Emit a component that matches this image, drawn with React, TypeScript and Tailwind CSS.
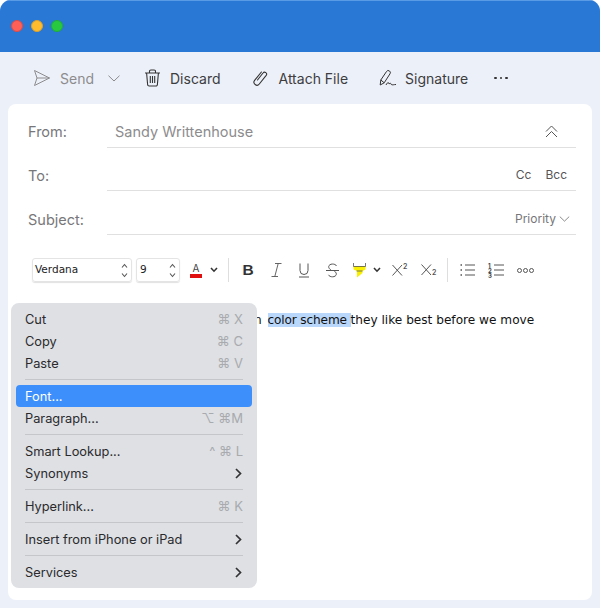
import React from "react";

const ui = { fontFamily: "Inter, 'Noto Sans', sans-serif" };

function Chevron({ className = "", w = 12, h = 7 }: { className?: string; w?: number; h?: number }) {
  return (
    <svg width={w} height={h} viewBox="0 0 12 7" fill="none" stroke="currentColor" strokeWidth="1" className={className}>
      <path d="M0.5 0.7 L6 6 L11.5 0.7" />
    </svg>
  );
}

function Updown() {
  return (
    <svg width="7" height="15" viewBox="0 0 7 15" fill="none" stroke="#555" strokeWidth="1.1">
      <path d="M1 4.5 L3.5 1.5 L6 4.5" />
      <path d="M1 10.5 L3.5 13.5 L6 10.5" />
    </svg>
  );
}

function SmallCaret() {
  return (
    <svg width="8" height="6" viewBox="0 0 8 6" fill="none" stroke="#333" strokeWidth="1.6">
      <path d="M1 1 L4 4.2 L7 1" />
    </svg>
  );
}

function Row({ label, h, pt, children }: { label: string; h: string; pt: string; children?: React.ReactNode }) {
  return (
    <div className={`flex ${h}`}>
      <div className={`w-[79px] shrink-0 flex items-center text-[14.5px] text-[#77777a] ${pt}`}>{label}</div>
      <div className={`flex-1 flex items-center justify-between border-b border-[#e0e0e0] ${pt}`}>{children}</div>
    </div>
  );
}

function Sep() {
  return <div className="h-[11px] flex items-center mx-[14px]"><div className="h-px w-full bg-[#c4c6ca]" /></div>;
}

function Item({ label, right, active, arrow }: { label: string; right?: string; active?: boolean; arrow?: boolean }) {
  return (
    <div className={`h-[22px] mx-[5px] pl-[9px] pr-[9px] pt-[1px] rounded-[4px] flex items-center justify-between text-[12.8px] ${active ? "bg-[#3d8ffb] text-white" : "text-[#2a2a2c]"}`}>
      <span>{label}</span>
      {right && <span className="text-[#a8aaae] text-[13px]">{right}</span>}
      {arrow && (
        <svg width="7" height="11" viewBox="0 0 7 11" fill="none" stroke="#333" strokeWidth="1.7" className="mr-[1px]">
          <path d="M1 1 L5.5 5.5 L1 10" />
        </svg>
      )}
    </div>
  );
}

function Slot({ w, children }: { w: string; children: React.ReactNode }) {
  return <div className={`${w} shrink-0 flex items-center justify-center`}>{children}</div>;
}

export default function App() {
  return (
    <div className="relative w-[600px] h-[608px] bg-white overflow-hidden" style={ui}>
      <div className="h-full flex flex-col bg-[#ecf0f8] rounded-t-[11px] overflow-hidden">
        <div className="h-[52px] shrink-0 bg-[#2a78d6] border-t border-[#5a9be6] flex items-center pl-[11px] gap-[8px] pb-[2px]">
          <div className="w-[12px] h-[12px] rounded-full bg-[#fe5f57] border border-[#e2493f]" />
          <div className="w-[12px] h-[12px] rounded-full bg-[#febc2e] border border-[#e0a023]" />
          <div className="w-[12px] h-[12px] rounded-full bg-[#28c840] border border-[#1fae33]" />
        </div>

        <div className="h-[52px] shrink-0 flex items-center pl-[33px] text-[14px] text-[#3d3d40]">
          <svg width="18" height="18" viewBox="0 0 18 18" fill="none" stroke="#8c8c8e" strokeWidth="1" strokeLinejoin="round">
            <path d="M1.5 1.5 L16.5 9 L1.5 16.5 L4 9 Z" />
            <path d="M4 9 L16.5 9" />
          </svg>
          <span className="ml-[9px] pt-[1px] text-[#8c8c8e]">Send</span>
          <Chevron className="ml-[14px] text-[#8c8c8e]" />
          <svg className="ml-[24px]" width="17" height="18" viewBox="0 0 17 18" fill="none" stroke="#333" strokeWidth="1.1">
            <path d="M1 4 H16" />
            <path d="M5.5 4 V2.6 A1.4 1.4 0 0 1 7 1 H10 A1.4 1.4 0 0 1 11.5 2.6 V4" />
            <path d="M2.6 4 L3.6 15.4 A1.6 1.6 0 0 0 5.2 17 H11.8 A1.6 1.6 0 0 0 13.4 15.4 L14.4 4" />
            <path d="M6.3 7 V14 M8.5 7 V14 M10.7 7 V14" />
          </svg>
          <span className="ml-[9px] pt-[1px]">Discard</span>
          <svg className="ml-[32px]" width="15" height="16" viewBox="0 0 15 16" fill="none" stroke="#333" strokeWidth="1.1" strokeLinecap="round">
            <path d="M4.5 10 L10 3 A2 2 0 0 1 13.2 5.4 L6.3 14 A2.9 2.9 0 0 1 1.6 10.4 L8.4 2" />
          </svg>
          <span className="ml-[11px] pt-[1px]">Attach File</span>
          <svg className="ml-[31px]" width="18" height="18" viewBox="0 0 18 18" fill="none" stroke="#333" strokeWidth="1" strokeLinejoin="round">
            <path d="M1.2 16 L1.8 11 L7.5 2.5 A2 2 0 0 1 11 4.8 L5.2 13.8 Z" />
            <path d="M1.8 11 L5.2 13.8" />
            <path d="M7 16 C8.5 13 10 13 10 15 C11 14 12 14 12.3 15.5 C13.2 16.3 15 15.5 17 15.5" />
          </svg>
          <span className="ml-[8px] pt-[1px]">Signature</span>
          <div className="ml-[26px] flex gap-[3px]">
            <div className="w-[2.5px] h-[2.5px] rounded-full bg-[#333]" />
            <div className="w-[2.5px] h-[2.5px] rounded-full bg-[#333]" />
            <div className="w-[2.5px] h-[2.5px] rounded-full bg-[#333]" />
          </div>
        </div>

        <div className="flex-1 mx-[8px] mb-[8px] bg-white rounded-[8px] pl-[20px] pr-[16px]">
          <Row label="From:" h="h-[44px]" pt="pt-[12px]">
            <span className="pl-[8px] text-[14.5px] text-[#8c8c8e]">Sandy Writtenhouse</span>
            <svg className="mr-[18px]" width="13" height="13" viewBox="0 0 13 13" fill="none" stroke="#555" strokeWidth="1">
              <path d="M1 6.5 L6.5 1 L12 6.5" />
              <path d="M1 12 L6.5 6.5 L12 12" />
            </svg>
          </Row>
          <Row label="To:" h="h-[43px]" pt="pt-[12px]">
            <span />
            <div className="flex gap-[14px] pr-[9px] text-[12px] text-[#555558]">
              <span>Cc</span>
              <span>Bcc</span>
            </div>
          </Row>
          <Row label="Subject:" h="h-[44px]" pt="pt-[13px]">
            <span />
            <div className="flex items-center gap-[3px] pr-[6px] text-[12px] text-[#77777a]">
              <span>Priority</span>
              <Chevron w={11} h={6} />
            </div>
          </Row>

          <div className="h-[24px] mt-[23px] flex items-center ml-[4px]">
            <div className="w-[100px] h-[24px] shrink-0 rounded-[3px] border border-[#e4e4e4] shadow-[0_1px_1px_rgba(0,0,0,0.12)] flex items-center justify-between pl-[2px] pr-[3px] text-[10.5px] text-[#222]" style={{ fontFamily: "'DejaVu Sans', sans-serif" }}>
              <span>Verdana</span>
              <Updown />
            </div>
            <div className="ml-[4px] w-[44px] h-[24px] shrink-0 rounded-[3px] border border-[#e4e4e4] shadow-[0_1px_1px_rgba(0,0,0,0.12)] flex items-center justify-between pl-[3px] pr-[3px] text-[10.5px] text-[#222]" style={{ fontFamily: "'DejaVu Sans', sans-serif" }}>
              <span>9</span>
              <Updown />
            </div>
            <div className="ml-[10px] w-[12px] shrink-0 flex flex-col items-center">
              <span className="text-[10px] leading-[11px] text-[#444]">A</span>
              <div className="w-[12px] h-[4px] bg-[#e01010] mt-[0px]" />
            </div>
            <div className="ml-[8px]"><SmallCaret /></div>
            <div className="ml-[10px] w-px h-[24px] bg-[#dedede] shrink-0" />
            <Slot w="w-[38px]">
              <span className="text-[15.5px] font-bold text-[#333] leading-none" style={{ fontFamily: "'Liberation Sans', sans-serif" }}>B</span>
            </Slot>
            <Slot w="w-[18px]">
              <svg width="11" height="14" viewBox="0 0 11 14" fill="none" stroke="#555" strokeWidth="0.9">
                <path d="M4 0.5 H10.5 M0.5 13.5 H7 M7.2 0.5 L3.8 13.5" />
              </svg>
            </Slot>
            <Slot w="w-[38px]">
              <svg width="10" height="15" viewBox="0 0 10 15" fill="none" stroke="#555" strokeWidth="1">
                <path d="M1 0.5 V7.5 A4 4 0 0 0 9 7.5 V0.5" />
                <path d="M0 14 H10" />
              </svg>
            </Slot>
            <Slot w="w-[18px]">
              <svg width="13" height="15" viewBox="0 0 13 15" fill="none" stroke="#555" strokeWidth="1">
                <path d="M10.5 3 C9.5 0.3 3 0.3 2.7 3.6 C2.6 5.2 3.8 6.2 5.5 7.5" />
                <path d="M7.5 7.5 C9.4 8.6 10.5 9.7 10.3 11.3 C10 14.5 3.5 14.6 2.5 11.8" />
                <path d="M0 7.5 H13" />
              </svg>
            </Slot>
            <div className="ml-[12px] shrink-0">
              <svg width="13" height="15" viewBox="0 0 13 15">
                <path d="M0.5 3 H12.5 V6.5 L9.5 8 V10 L4 14.5 V8 L0.5 6.5 Z" fill="#f8f000" />
                <path d="M0.5 0 V3.5 H12.5 V0" fill="none" stroke="#555" strokeWidth="0.8" />
                <path d="M3.5 8 H9.5" stroke="#555" strokeWidth="0.8" />
              </svg>
            </div>
            <div className="ml-[7px]"><SmallCaret /></div>
            <div className="ml-[11px] flex items-start text-[#555] shrink-0 w-[16px]">
              <svg width="11" height="12" viewBox="0 0 11 12" fill="none" stroke="#555" strokeWidth="1"><path d="M0.5 1 L10 11.5 M10 1 L0.5 11.5" /></svg>
              <span className="text-[7px] leading-[6px] font-semibold">2</span>
            </div>
            <div className="ml-[13px] flex items-end text-[#555] shrink-0 w-[16px]">
              <svg width="11" height="12" viewBox="0 0 11 12" fill="none" stroke="#555" strokeWidth="1"><path d="M0.5 0.5 L10 11 M10 0.5 L0.5 11" /></svg>
              <span className="text-[7px] leading-[6px] font-semibold">2</span>
            </div>
            <div className="ml-[10px] w-px h-[24px] bg-[#dedede] shrink-0" />
            <div className="ml-[12px] shrink-0">
              <svg width="15" height="12" viewBox="0 0 15 12" fill="none" stroke="#555" strokeWidth="1">
                <path d="M5 1 H15 M5 6 H15 M5 11 H15" />
                <path d="M0.5 1 H2 M0.5 6 H2 M0.5 11 H2" strokeWidth="1.6" />
              </svg>
            </div>
            <div className="ml-[13px] flex items-center gap-[2px] shrink-0">
              <div className="flex flex-col text-[6px] leading-[5px] font-bold text-[#444]">
                <span>1</span>
                <span>2</span>
                <span>3</span>
              </div>
              <svg width="10" height="12" viewBox="0 0 10 12" fill="none" stroke="#555" strokeWidth="1">
                <path d="M0 1 H10 M0 6 H10 M0 11 H10" />
              </svg>
            </div>
            <div className="ml-[13px] flex gap-[1px] shrink-0">
              <div className="w-[5px] h-[5px] rounded-full border border-[#555]" />
              <div className="w-[5px] h-[5px] rounded-full border border-[#555]" />
              <div className="w-[5px] h-[5px] rounded-full border border-[#555]" />
            </div>
          </div>

          <div className="mt-[30px] pl-[226px] text-[12.13px] leading-[16px] text-[#111] whitespace-nowrap" style={{ fontFamily: "'DejaVu Sans', sans-serif" }}>
            n <span className="ml-[2px] -mr-[0px] tracking-[-0.15px] bg-[#b9d6fb]">color scheme </span>they like best before we move
          </div>
        </div>
      </div>

      <div className="absolute left-[11px] top-[303px] w-[246px] h-[285px] rounded-[8px] bg-[#dee0e4] py-[5px]">
        <Item label="Cut" right="⌘ X" />
        <Item label="Copy" right="⌘ C" />
        <Item label="Paste" right="⌘ V" />
        <Sep />
        <Item label="Font..." active />
        <Item label="Paragraph..." right="⌥ ⌘M" />
        <Sep />
        <Item label="Smart Lookup..." right="^ ⌘ L" />
        <Item label="Synonyms" arrow />
        <Sep />
        <Item label="Hyperlink..." right="⌘ K" />
        <Sep />
        <Item label="Insert from iPhone or iPad" arrow />
        <Sep />
        <Item label="Services" arrow />
      </div>
    </div>
  );
}
